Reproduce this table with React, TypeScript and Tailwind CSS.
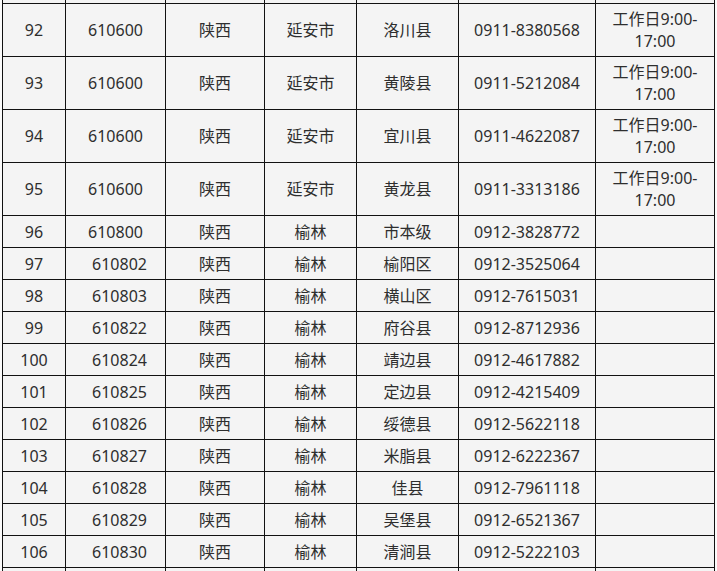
import React from 'react';

type Row = {
  no: number;
  code: string;
  prov: string;
  city: string;
  county: string;
  phone: string;
  hours?: boolean;
  shift?: boolean;
};

const rows: Row[] = [
  { no: 92, code: '610600', prov: '陕西', city: '延安市', county: '洛川县', phone: '0911-8380568', hours: true },
  { no: 93, code: '610600', prov: '陕西', city: '延安市', county: '黄陵县', phone: '0911-5212084', hours: true },
  { no: 94, code: '610600', prov: '陕西', city: '延安市', county: '宜川县', phone: '0911-4622087', hours: true },
  { no: 95, code: '610600', prov: '陕西', city: '延安市', county: '黄龙县', phone: '0911-3313186', hours: true },
  { no: 96, code: '610800', prov: '陕西', city: '榆林', county: '市本级', phone: '0912-3828772' },
  { no: 97, code: '610802', prov: '陕西', city: '榆林', county: '榆阳区', phone: '0912-3525064', shift: true },
  { no: 98, code: '610803', prov: '陕西', city: '榆林', county: '横山区', phone: '0912-7615031', shift: true },
  { no: 99, code: '610822', prov: '陕西', city: '榆林', county: '府谷县', phone: '0912-8712936', shift: true },
  { no: 100, code: '610824', prov: '陕西', city: '榆林', county: '靖边县', phone: '0912-4617882', shift: true },
  { no: 101, code: '610825', prov: '陕西', city: '榆林', county: '定边县', phone: '0912-4215409', shift: true },
  { no: 102, code: '610826', prov: '陕西', city: '榆林', county: '绥德县', phone: '0912-5622118', shift: true },
  { no: 103, code: '610827', prov: '陕西', city: '榆林', county: '米脂县', phone: '0912-6222367', shift: true },
  { no: 104, code: '610828', prov: '陕西', city: '榆林', county: '佳县', phone: '0912-7961118', shift: true },
  { no: 105, code: '610829', prov: '陕西', city: '榆林', county: '吴堡县', phone: '0912-6521367', shift: true },
  { no: 106, code: '610830', prov: '陕西', city: '榆林', county: '清涧县', phone: '0912-5222103', shift: true },
];

const td = 'border border-[#111] text-center align-middle p-0';

export default function App() {
  return (
    <div className="h-[571px] w-[717px] overflow-hidden bg-[#fbfbfb]">
      <table
        className="-mt-[50px] ml-[2px] table-fixed border-collapse bg-[#f4f4f4] text-[16px] leading-[22px] text-[#2e2e2e]"
        style={{ fontFamily: '"Noto Sans", "Noto Sans CJK SC", sans-serif' }}
      >
        <colgroup>
          <col className="w-[63px]" />
          <col className="w-[100px]" />
          <col className="w-[99px]" />
          <col className="w-[92px]" />
          <col className="w-[102px]" />
          <col className="w-[137px]" />
          <col className="w-[119px]" />
        </colgroup>
        <tbody>
          <tr className="h-[53px]">
            <td className={td} />
            <td className={td} />
            <td className={td} />
            <td className={td} />
            <td className={td} />
            <td className={td} />
            <td className={td} />
          </tr>
          {rows.map((r) => (
            <tr key={r.no} className={r.hours ? 'h-[53px]' : 'h-[32px]'}>
              <td className={td}>{r.no}</td>
              <td className={`${td} ${r.shift ? 'pl-[8px]' : ''}`}>{r.code}</td>
              <td className={td}>{r.prov}</td>
              <td className={td}>{r.city}</td>
              <td className={td}>{r.county}</td>
              <td className={td}>{r.phone}</td>
              <td className={td}>
                {r.hours && (
                  <>
                    工作日9:00-
                    <br />
                    17:00
                  </>
                )}
              </td>
            </tr>
          ))}
          <tr className="h-[32px]">
            <td className={td} />
            <td className={td} />
            <td className={td} />
            <td className={td} />
            <td className={td} />
            <td className={td} />
            <td className={td} />
          </tr>
        </tbody>
      </table>
    </div>
  );
}
